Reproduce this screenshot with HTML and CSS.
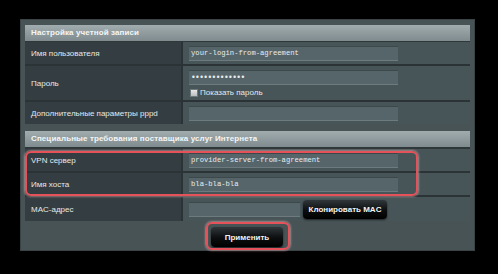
FILE: index.html
```html
<!DOCTYPE html>
<html lang="ru">
<head>
<meta charset="utf-8">
<title>Настройка учетной записи</title>
<link rel="stylesheet" href="styles.css">
</head>
<body>
<div class="panel">
  <div class="section">
    <div class="head">Настройка учетной записи</div>
    <div class="row">
      <div class="label">Имя пользователя</div>
      <div class="value"><div class="input">your-login-from-agreement</div></div>
    </div>
    <div class="row tall">
      <div class="label">Пароль</div>
      <div class="value col">
        <div class="input pass">•••••••••••••</div>
        <label class="check"><span class="box"></span>Показать пароль</label>
      </div>
    </div>
    <div class="row">
      <div class="label">Дополнительные параметры pppd</div>
      <div class="value"><div class="input"></div></div>
    </div>
  </div>
  <div class="section second">
    <div class="head">Специальные требования поставщика услуг Интернета</div>
    <div class="hl-group">
      <div class="row">
        <div class="label">VPN сервер</div>
        <div class="value"><div class="input">provider-server-from-agreement</div></div>
      </div>
      <div class="row">
        <div class="label">Имя хоста</div>
        <div class="value"><div class="input">bla-bla-bla</div></div>
      </div>
      <div class="hl hl-rows"></div>
    </div>
    <div class="row mac">
      <div class="label">MAC-адрес</div>
      <div class="value"><div class="input short"></div><button class="btn clone">Клонировать MAC</button></div>
    </div>
  </div>
  <div class="actions">
    <div class="apply-wrap">
      <button class="btn apply">Применить</button>
      <div class="hl hl-btn"></div>
    </div>
  </div>
</div>
</body>
</html>
```
FILE: styles.css
```css
* { box-sizing: border-box; }
html, body { margin: 0; padding: 0; }
body {
  background: #000;
  width: 498px;
  height: 274px;
  overflow: hidden;
  font-family: "Liberation Sans", Arial, sans-serif;
  font-size: 8px;
  color: #e4e8e9;
}
.panel {
  margin: 19px 0 0 20px;
  width: 455px;
  height: 232px;
  padding: 5px 4px 0 4px;
  background: #485356;
  border: 1px solid #3a4447;
}
.section {
  background: #2e373a;
}
.section.second { margin-top: 7px; }
.head {
  height: 17px;
  line-height: 16px;
  padding-left: 6px;
  font-weight: bold;
  color: #f4f6f6;
  background: linear-gradient(#a1acaf, #7f8b8e 94%, #2e373a 94%);
  letter-spacing: 0.1px;
}
.second .head {
  height: 18px;
  background: linear-gradient(#a1acaf, #7f8b8e 89%, #2e373a 89%);
}
.row {
  display: flex;
  height: 24px;
  border-bottom: 2px solid #2b3336;
}
.row.tall { height: 36px; }
.row:last-child { border-bottom: none; }
.row.mac { height: 24px; }
.section:first-child .row:last-child { height: 22px; }
.label {
  width: 158px;
  padding-left: 6px;
  display: flex;
  align-items: center;
  background: #343e42;
  border-right: 2px solid #2b3336;
}
.value {
  flex: 1;
  display: flex;
  align-items: center;
  padding-left: 6px;
  background: #475458;
}
.value.col {
  flex-direction: column;
  align-items: flex-start;
  justify-content: flex-start;
  padding-top: 4px;
}
.input {
  width: 209px;
  height: 15px;
  background: #56656a;
  border-top: 1px solid #3d484b;
  border-bottom: 1px solid #6d7b7f;
  font-family: "Liberation Mono", "Courier New", monospace;
  font-size: 7.2px;
  line-height: 13px;
  padding-left: 2px;
  color: #e8eced;
}
.input.pass {
  font-family: "DejaVu Sans", sans-serif;
  font-size: 8px;
  letter-spacing: -0.6px;
}
.input.short { width: 111px; }
.check {
  display: flex;
  align-items: center;
  margin-top: 3px;
  margin-left: 1px;
}
.box {
  width: 8px;
  height: 8px;
  margin-right: 2px;
  background: linear-gradient(#e8e8e8, #b8bcbd);
  border: 1px solid #707a7d;
}
.hl-group { position: relative; }
.hl {
  position: absolute;
  border: 2px solid #e5525a;
  border-radius: 6px;
  box-shadow: 0 0 2px 1px rgba(255, 200, 200, 0.45);
  pointer-events: none;
}
.hl-rows { left: 0; top: 2px; width: 393px; height: 45px; }
.btn {
  border: none;
  font-family: "Liberation Sans", Arial, sans-serif;
  font-weight: bold;
  font-size: 8px;
  color: #f2f4f4;
  background: linear-gradient(#30373a, #0c0e0f 55%, #000);
  border-radius: 4px;
  box-shadow: 0 1px 2px rgba(0, 0, 0, 0.6);
  padding: 0;
}
.clone {
  width: 84px;
  height: 19px;
  margin-left: 3px;
}
.actions {
  display: flex;
  justify-content: center;
  padding-top: 6px;
  padding-right: 1px;
}
.apply-wrap { position: relative; }
.apply {
  width: 72px;
  height: 20px;
  display: block;
}
.hl-btn { left: -5px; top: -5px; width: 84px; height: 28px; }
```
